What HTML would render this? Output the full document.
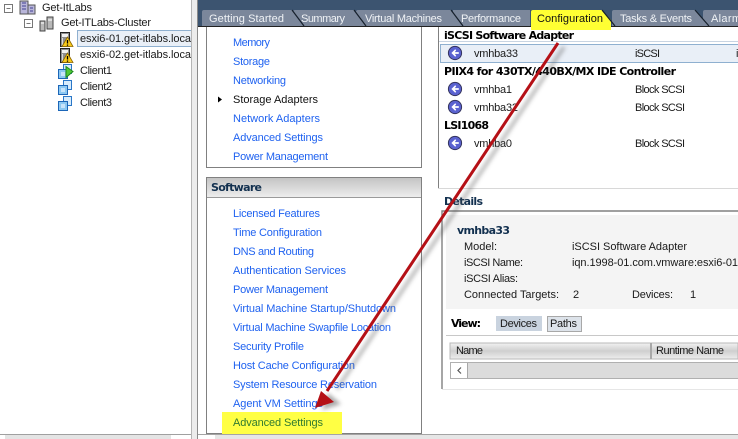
<!DOCTYPE html>
<html><head><meta charset="utf-8"><style>
html,body{margin:0;padding:0;background:#fff;width:738px;height:439px;overflow:hidden}
svg{display:block}
text{font-family:"Liberation Sans",sans-serif;font-size:11px;fill:#1a1a1a}
.l{fill:#1f62f0}
.b{font-family:"DejaVu Sans",sans-serif;font-weight:bold;fill:#000}
.t{fill:#f0f3f6}
</style></head><body>
<svg width="738" height="439" viewBox="0 0 738 439" xmlns="http://www.w3.org/2000/svg">
<defs>
<linearGradient id="h" x1="0" y1="0" x2="0" y2="1"><stop offset="0" stop-color="#c4c4c4"/><stop offset="1" stop-color="#efefef"/></linearGradient>
<linearGradient id="th" x1="0" y1="0" x2="0" y2="1"><stop offset="0" stop-color="#f2f2f2"/><stop offset=".5" stop-color="#cfcfcf"/><stop offset="1" stop-color="#eeeeee"/></linearGradient>
<filter id="blur" x="-20%" y="-20%" width="140%" height="140%"><feGaussianBlur stdDeviation="2"/></filter>
<g id="ad"><circle r="6.6" fill="#5a62d0" stroke="#34345e" stroke-width="1"/><path d="M3.800-.9H-.2L1.200-2.700.2-3.700-3.600 0 .2 3.700 1.200 2.700-.2.900H3.800Z" fill="#fff"/></g>
<g id="host"><path d="M.5.500H9.500V14.500H.5Z" fill="#8e8e8e" stroke="#222"/><path d="M2 2H8V5H2Z" fill="#f2f2f2"/><path d="M2 6H3V13H2Z" fill="#d8d8d8"/><path d="M7.500 5 13 14.500H2Z" fill="#f9cb1c" stroke="#8a6400" stroke-width=".8"/><path d="M7.500 8V11.500M7.500 12.500V13.800" stroke="#000" stroke-width="1.300"/></g>
<g id="vm"><path d="M5.500 .5H13.500V9.500H5.500Z" fill="#d8ecfc" stroke="#2a77c8"/><path d="M.5 5.500H9.500V14.500H.5Z" fill="#8cc8f2" stroke="#1c66b8"/><path d="M3 8H7V12H3Z" fill="#c8e4fa"/></g>
</defs>

<!-- left pane -->
<rect x="191" y="0" width="7" height="439" fill="#ececec"/>
<rect x="191" y="0" width="1" height="439" fill="#b5b5b5"/>
<rect x="197" y="0" width="1" height="439" fill="#8a8a8a"/>
<rect x="0" y="434" width="191" height="5" fill="#e4e4e4"/>
<rect x="0" y="434" width="191" height="1" fill="#a0a0a0"/>
<rect x="0" y="435" width="5" height="4" fill="#fff"/><rect x="171" y="435" width="20" height="4" fill="#fff"/>

<path d="M4.500 4.500H12.500V12.500H4.500ZM6.500 8.500H10.500" fill="#fff" stroke="#777"/>
<path d="M24.500 19.500H32.500V27.500H24.500ZM26.500 23.500H30.500" fill="#fff" stroke="#777"/>
<path d="M20 1H28V14H20ZM28 5H35V14H28Z" fill="#b9b6da" stroke="#555"/><path d="M22 3H26M22 6H26M22 9H26M30 8H33M30 11H33" stroke="#5a58a0" stroke-width="1.300"/>
<path d="M40 21H45V31H40ZM47 17H53V29H47Z" fill="#b8b8b8" stroke="#444"/><path d="M41 23H44M48 20H52" stroke="#fff"/>
<rect x="77" y="31" width="114" height="15" fill="#e9eff7"/><path d="M191 30.500H77.500V46.500H191" fill="none" stroke="#8fb0d0"/>
<use href="#host" x="60" y="32"/><use href="#host" x="60" y="48"/>
<use href="#vm" x="58" y="64"/><path d="M66 66.500 73 71.500 66 77.500Z" fill="#4fc838" stroke="#1f8a1a"/>
<use href="#vm" x="58" y="80"/><use href="#vm" x="58" y="96"/>
<text x="42" y="11" textLength="50">Get-ItLabs</text>
<text x="61" y="26" textLength="90">Get-ITLabs-Cluster</text>
<text x="80" y="42" textLength="111">esxi6-01.get-itlabs.loca</text>
<text x="80" y="58" textLength="111">esxi6-02.get-itlabs.loca</text>
<text x="80" y="74" textLength="32">Client1</text>
<text x="80" y="90" textLength="32">Client2</text>
<text x="80" y="106" textLength="32">Client3</text>

<!-- header -->
<rect x="198" y="0" width="540" height="26" fill="#3c5470"/>
<g fill="#7b879b">
<path d="M202 26V12Q202 10 204 10H292L304 26Z"/>
<path d="M293 26V12Q293 10 295 10H354L362 22V26Z"/>
<path d="M356 26V12Q356 10 358 10H451L458 18V26Z"/>
<path d="M453 26V10H530V26Z"/>
<path d="M612 26V12Q612 10 614 10H695L710 26Z"/>
<path d="M703 26V12Q703 10 705 10H738V26Z"/>
</g>
<path d="M292 10 304 26M354 10 366 26M451 10 463 26M695 10 709 26" stroke="#16202c" stroke-width="1.200" fill="none"/>
<path d="M531 30V12Q531 10 533 10H602L611 20V30Z" fill="#ffff33"/>
<path d="M602 10 615 26" stroke="#16202c" stroke-width="1.200"/>
<text class="t" x="209" y="22" textLength="75">Getting Started</text>
<text class="t" x="301" y="22" textLength="44">Summary</text>
<text class="t" x="365" y="22" textLength="77">Virtual Machines</text>
<text class="t" x="461" y="22" textLength="60">Performance</text>
<text x="537" y="22" textLength="66" style="fill:#111">Configuration</text>
<text class="t" x="620" y="22" textLength="72">Tasks &amp; Events</text>
<text class="t" x="711" y="22" textLength="30">Alarm</text>
<rect x="198" y="26" width="333" height="1" fill="#222"/><rect x="611" y="26" width="127" height="1" fill="#222"/>

<!-- left boxes -->
<path d="M206.500 27V167.500H421.500V27" fill="none" stroke="#808080"/>
<rect x="206.500" y="177.500" width="215" height="256" fill="#fff" stroke="#808080"/>
<rect x="207" y="178" width="214" height="20" fill="url(#h)"/>
<rect x="207" y="197" width="214" height="1" fill="#9a9a9a"/>
<text class="b" x="211" y="191" textLength="51" style="fill:#12304f">Software</text>

<rect x="222" y="412" width="120" height="22" fill="#ffff44"/>

<path d="M218 96.500 222 99.500 218 102.500Z" fill="#000"/>
<text class="l" x="233" y="46" textLength="37">Memory</text>
<text class="l" x="233" y="65" textLength="37">Storage</text>
<text class="l" x="233" y="84" textLength="53">Networking</text>
<text x="233" y="103" textLength="85" style="fill:#111">Storage Adapters</text>
<text class="l" x="233" y="122" textLength="87">Network Adapters</text>
<text class="l" x="233" y="141" textLength="90">Advanced Settings</text>
<text class="l" x="233" y="160" textLength="95">Power Management</text>
<text class="l" x="233" y="217" textLength="87">Licensed Features</text>
<text class="l" x="233" y="236" textLength="89">Time Configuration</text>
<text class="l" x="233" y="255" textLength="81">DNS and Routing</text>
<text class="l" x="233" y="274" textLength="113">Authentication Services</text>
<text class="l" x="233" y="293" textLength="95">Power Management</text>
<text class="l" x="233" y="312" textLength="163">Virtual Machine Startup/Shutdown</text>
<text class="l" x="233" y="331" textLength="158">Virtual Machine Swapfile Location</text>
<text class="l" x="233" y="350" textLength="71">Security Profile</text>
<text class="l" x="233" y="369" textLength="122">Host Cache Configuration</text>
<text class="l" x="233" y="388" textLength="144">System Resource Reservation</text>
<text class="l" x="233" y="407" textLength="90">Agent VM Settings</text>
<text x="233" y="426" textLength="90" style="fill:#2f7a30">Advanced Settings</text>

<!-- right top panel -->
<rect x="438" y="27" width="1" height="161" fill="#808080"/>
<rect x="438" y="188" width="300" height="1" fill="#d8d8d8"/>
<rect x="439" y="41" width="299" height="1" fill="#c8d4e2"/>
<rect x="440" y="45" width="298" height="17" fill="#e9eff7"/>
<path d="M738 44.500H440.500V62.500H738" fill="none" stroke="#8fb0d0"/>
<text class="b" x="444" y="39" textLength="130">iSCSI Software Adapter</text>
<text class="b" x="444" y="75" textLength="232">PIIX4 for 430TX/440BX/MX IDE Controller</text>
<text class="b" x="444" y="129" textLength="45">LSI1068</text>
<use href="#ad" x="455" y="53"/><use href="#ad" x="455" y="89"/><use href="#ad" x="455" y="107"/><use href="#ad" x="455" y="143"/>
<text x="474" y="57" textLength="44">vmhba33</text><text x="635" y="57" textLength="25">iSCSI</text><text x="736" y="57">i</text>
<text x="474" y="93" textLength="38">vmhba1</text><text x="635" y="93" textLength="50">Block SCSI</text>
<text x="474" y="111" textLength="44">vmhba32</text><text x="635" y="111" textLength="50">Block SCSI</text>
<text x="474" y="147" textLength="38">vmhba0</text><text x="635" y="147" textLength="50">Block SCSI</text>

<!-- details -->
<text class="b" x="444" y="205" textLength="39" style="fill:#12304f">Details</text>
<path d="M738 211H442V389" fill="none" stroke="#808080" stroke-width="1.400"/>
<rect x="442" y="389" width="296" height="1" fill="#e6e6e6"/>
<rect x="446" y="215" width="292" height="94" fill="#f4f4f4"/>
<text class="b" x="457" y="234" textLength="53" style="fill:#12304f">vmhba33</text>
<text x="464" y="250" textLength="33">Model:</text><text x="572" y="250" textLength="115">iSCSI Software Adapter</text>
<text x="464" y="266" textLength="59">iSCSI Name:</text><text x="572" y="266" textLength="166">iqn.1998-01.com.vmware:esxi6-01</text>
<text x="464" y="282" textLength="54">iSCSI Alias:</text>
<text x="464" y="298" textLength="95">Connected Targets:</text><text x="573" y="298">2</text>
<text x="632" y="298" textLength="41">Devices:</text><text x="690" y="298">1</text>
<text class="b" x="451" y="327" textLength="30">View:</text>
<rect x="496" y="316" width="46" height="15" fill="#c9d3df"/>
<rect x="547.500" y="316.500" width="34" height="15" fill="#dde3ea" stroke="#a8a8a8"/>
<text x="500" y="327" textLength="37">Devices</text><text x="550" y="327" textLength="27">Paths</text>
<rect x="446" y="335" width="292" height="1" fill="#c8c8c8"/>
<rect x="450" y="343" width="288" height="16" fill="url(#th)" stroke="#b8b8b8"/>
<rect x="650" y="343" width="2" height="16" fill="#a8a8a8"/>
<text x="456" y="354" textLength="27">Name</text><text x="656" y="354" textLength="68">Runtime Name</text>
<rect x="450" y="362" width="288" height="17" fill="#dcdcdc"/><path d="M738 362.500H450.500V378.500H738" fill="none" stroke="#b0b0b0"/>
<rect x="451" y="363" width="16" height="15" fill="#fff"/><rect x="467" y="363" width="1" height="15" fill="#a8a8a8"/>
<path d="M461 367.500 458 370.500 461 373.500" fill="none" stroke="#555" stroke-width="1.200"/>

<!-- bottom status -->
<rect x="198" y="434" width="540" height="5" fill="#e6e6e6"/>
<rect x="198" y="434" width="540" height="1" fill="#a4a4a4"/>
<rect x="198" y="435" width="17" height="4" fill="#fff"/>

<!-- arrow -->
<g filter="url(#blur)" opacity=".5"><path d="M564 47 337 389" stroke="#555" stroke-width="3" fill="none"/><path d="M322 410 328 393 341 404Z" fill="#555"/></g>
<path d="M558 43 327 391" stroke="#b51016" stroke-width="3" fill="none"/>
<path d="M315 408 321 391 334 402Z" fill="#b51016"/>
</svg>
</body></html>
